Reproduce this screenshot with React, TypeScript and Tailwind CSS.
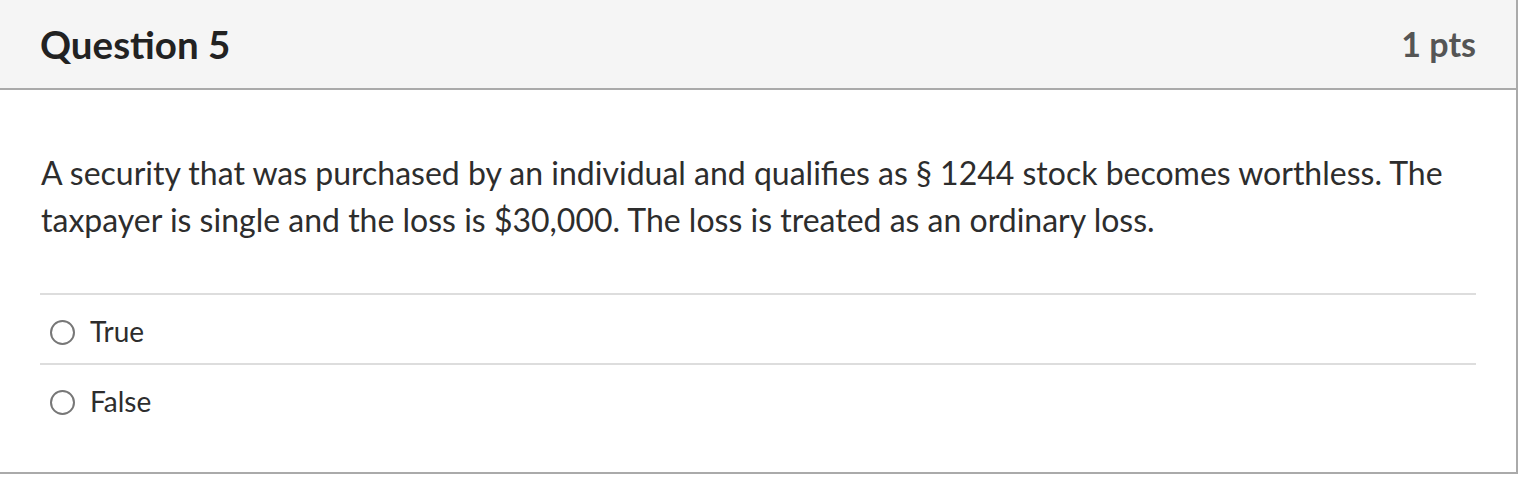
import React from 'react';

const options = ['True', 'False'];

export default function App() {
  return (
    <div className="w-[1522px] h-[478px] bg-white" style={{ fontFamily: 'Lato, "Noto Sans", sans-serif' }}>
      <div className="w-[1518px] border-r-2 border-b-2 border-[#aaaaaa] bg-white">
        <div className="h-[90px] flex items-center justify-between px-10 bg-[#f5f5f5] border-b-2 border-[#aaaaaa]">
          <h2 className="text-[38.5px] font-bold text-[#222222] leading-none">Question 5</h2>
          <span className="text-[34px] font-bold text-[#555555] leading-none">1 pts</span>
        </div>

        <div className="px-10 pt-[59px] pb-[39px]">
          <p className="text-[32px] leading-[47px] text-[#2d2d2d] pl-[1px]">
            A security that was purchased by an individual and qualifies as § 1244 stock becomes worthless. The
            taxpayer is single and the loss is $30,000. The loss is treated as an ordinary loss.
          </p>

          <div className="mt-[50px]">
            {options.map((opt) => (
              <label
                key={opt}
                className="flex items-center gap-[15px] h-[70px] border-t-2 border-[#dddddd] pl-[10px] cursor-pointer"
              >
                <span className="w-[25px] h-[25px] rounded-full border-2 border-[#777777] bg-white shrink-0 mt-[6px]" />
                <span className="text-[28px] text-[#2d2d2d] mt-[4px]">{opt}</span>
              </label>
            ))}
          </div>
        </div>
      </div>
    </div>
  );
}
